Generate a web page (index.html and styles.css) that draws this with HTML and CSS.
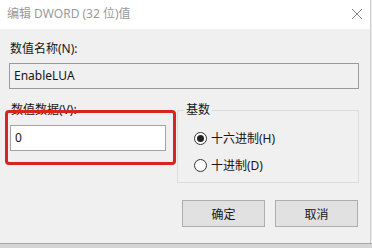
FILE: index.html
```html
<!DOCTYPE html>
<html lang="zh-CN">
<head>
<meta charset="utf-8">
<title>编辑 DWORD (32 位)值</title>
<link rel="stylesheet" href="styles.css">
</head>
<body>
<div class="window">
  <div class="titlebar">
    <span class="title">编辑 DWORD (32 位)值</span>
    <svg class="close" width="12" height="12" viewBox="0 0 12 12"><path d="M1 1L11 11M11 1L1 11" stroke="#8a8a8a" stroke-width="1"/></svg>
  </div>
  <div class="content">
    <div class="label">数值名称(N):</div>
    <div class="field readonly">EnableLUA</div>
    <div class="row">
      <div class="data-col">
        <div class="label">数值数据(V):</div>
        <div class="field data">0</div>
        <div class="highlight"></div>
      </div>
      <fieldset class="base">
        <legend>基数</legend>
        <div class="radio"><span class="dot checked"></span><span>十六进制(H)</span></div>
        <div class="radio"><span class="dot"></span><span>十进制(D)</span></div>
      </fieldset>
    </div>
    <div class="buttons">
      <div class="btn">确定</div>
      <div class="btn">取消</div>
    </div>
  </div>
</div>
<div class="taskbar"></div>
</body>
</html>
```
FILE: styles.css
```css
html, body {
  margin: 0;
  padding: 0;
}
body {
  width: 372px;
  height: 248px;
  overflow: hidden;
  background: #ececec;
  font-family: "Noto Sans", "Noto Sans CJK SC", sans-serif;
  font-size: 12px;
  color: #161616;
}
.window {
  width: 370px;
  height: 243px;
  background: #f0f0f0;
  border-right: 1px solid #cfcfcf;
  display: flex;
  flex-direction: column;
}
.titlebar {
  height: 29px;
  background: #fff;
  display: flex;
  align-items: center;
  justify-content: space-between;
  padding: 0 7px 0 7px;
  flex: none;
}
.title {
  color: #9a9a9a;
  font-size: 12px;
  line-height: 16px;
  margin-top: -2px;
}
.close {
  margin-top: -2px;
}
.content {
  padding: 12px 11px 0 9px;
  display: flex;
  flex-direction: column;
}
.label {
  line-height: 16px;
  height: 16px;
  margin-left: 1px;
}
.field {
  box-sizing: border-box;
  height: 26px;
  border: 1px solid #9a9a9a;
  line-height: 24px;
  padding-left: 4px;
}
.readonly {
  margin-top: 6px;
  background: #f0f0f0;
}
.row {
  margin-top: 13px;
  display: grid;
  grid-template-columns: 156px 1fr;
  column-gap: 11px;
  padding-left: 1px;
}
.data-col {
  position: relative;
}
.data {
  margin-top: 7px;
  background: #fff;
  border-color: #a3a3a3;
}
.highlight {
  position: absolute;
  left: -5px;
  top: 8px;
  width: 171px;
  height: 55px;
  box-sizing: border-box;
  border: 3px solid #d8241f;
  border-radius: 4px;
}
.base {
  margin: 0;
  border: 1px solid #dcdcdc;
  padding: 10px 0 6px 6px;
  height: 81px;
  box-sizing: border-box;
}
.base legend {
  padding: 0 2px;
  line-height: 16px;
}
.radio {
  display: flex;
  align-items: center;
  height: 20px;
  gap: 4px;
  padding-left: 10px;
}
.radio + .radio {
  margin-top: 7px;
}
.dot {
  box-sizing: border-box;
  width: 13px;
  height: 13px;
  border: 1px solid #333;
  border-radius: 50%;
  background: #fff;
  display: flex;
  align-items: center;
  justify-content: center;
}
.dot.checked::after {
  content: "";
  width: 7px;
  height: 7px;
  border-radius: 50%;
  background: #222;
}
.buttons {
  margin-top: 17px;
  display: flex;
  justify-content: flex-end;
  gap: 10px;
  padding-right: 1px;
}
.btn {
  box-sizing: border-box;
  width: 83px;
  height: 27px;
  background: #e1e1e1;
  border: 1px solid #adadad;
  display: flex;
  align-items: center;
  justify-content: center;
}
.taskbar {
  height: 5px;
  border-top: 1px solid #a8a8a8;
  background: #d6d6d6;
}
```
